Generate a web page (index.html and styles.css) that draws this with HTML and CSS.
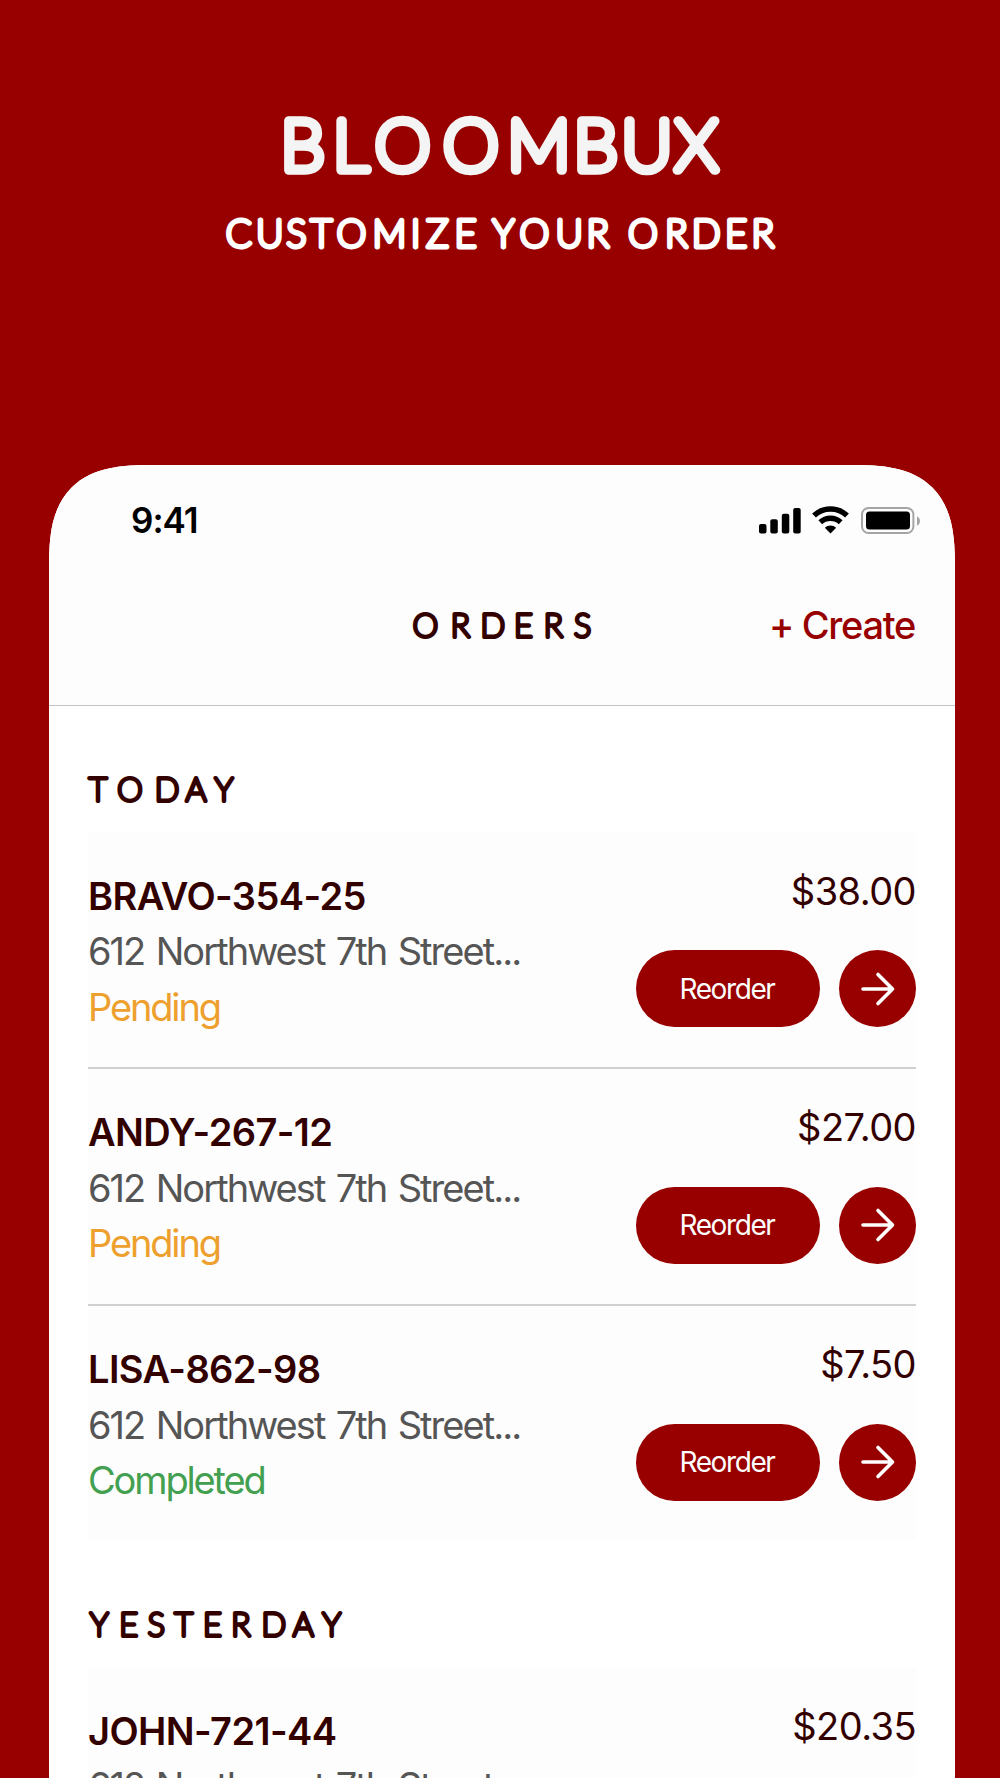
FILE: index.html
```html
<!DOCTYPE html>
<html lang="en">
<head>
  <meta charset="utf-8">
  <title>Bloombux</title>
  <link rel="stylesheet" href="styles.css">
</head>
<body>
  <header class="hero">
    <svg class="brand" viewBox="0 0 1000 90" width="1000" height="90">
      <text x="302.5 350.5 402.7 471 538.8 595.5 647 696.5" y="65">BLOOMBUX</text>
    </svg>
    <svg class="tagline" viewBox="0 0 1000 60" width="1000" height="60">
      <text x="238.7 269.7 296.4 321.3 351.5 389.4 415.5 437.3 465.6 485 503.5 534.5 569.3 597.8 620 642.8 676.2 706.2 736.2 762.7" y="47.2">CUSTOMIZE YOUR ORDER</text>
    </svg>
  </header>

  <main class="phone">
    <div class="top">
      <div class="status">
        <span class="time">9:41</span>
        <svg class="icons" viewBox="0 0 162 28" width="162" height="28">
          <g>
            <rect x="0" y="17" width="7.5" height="9.5" rx="2"/>
            <rect x="11.3" y="12.3" width="7.5" height="14.2" rx="2"/>
            <rect x="22.8" y="6.7" width="7.5" height="19.8" rx="2"/>
            <rect x="34.2" y="1" width="7.5" height="25.5" rx="2"/>
          </g>
          <path d="M71.5 26.6l-5.7-5.9a8.8 8.8 0 0 1 11.4 0z"/>
          <path class="arc" d="M55 8.6a24 24 0 0 1 33 0M61.3 15.2a15 15 0 0 1 20.4 0"/>
          <rect class="shell" x="103" y="1" width="51.4" height="25" rx="6.5"/>
          <rect x="107" y="4.6" width="44" height="18" rx="3.5"/>
          <path class="cap" d="M158 9.2c4 2 4 7.6 0 9.6z"/>
        </svg>
      </div>
      <div class="nav">
        <svg class="label" viewBox="0 0 200 40" width="200" height="40">
          <text x="25.3 60.2 92.8 123.3 153.3 182.6" y="28.8">ORDERS</text>
        </svg>
        <a class="create">+ Create</a>
      </div>
    </div>

    <section class="group">
      <svg class="label" viewBox="0 0 300 40" width="300" height="40">
        <text x="10 42 79 108 136" y="29.8">TODAY</text>
      </svg>
      <div class="orders">
        <div class="order">
          <div class="info">
            <div class="code">BRAVO-354-25</div>
            <div class="address">612 Northwest 7th Street...</div>
            <div class="pending">Pending</div>
          </div>
          <div class="side">
            <div class="price">$38.00</div>
            <div class="actions">
              <button class="reorder">Reorder</button>
              <button class="go"><svg viewBox="0 0 36 36" width="36" height="36"><path d="M3 18h29M18 3.5L32.5 18 18 32.5"/></svg></button>
            </div>
          </div>
        </div>
        <div class="order">
          <div class="info">
            <div class="code">ANDY-267-12</div>
            <div class="address">612 Northwest 7th Street...</div>
            <div class="pending">Pending</div>
          </div>
          <div class="side">
            <div class="price">$27.00</div>
            <div class="actions">
              <button class="reorder">Reorder</button>
              <button class="go"><svg viewBox="0 0 36 36" width="36" height="36"><path d="M3 18h29M18 3.5L32.5 18 18 32.5"/></svg></button>
            </div>
          </div>
        </div>
        <div class="order">
          <div class="info">
            <div class="code">LISA-862-98</div>
            <div class="address">612 Northwest 7th Street...</div>
            <div class="completed">Completed</div>
          </div>
          <div class="side">
            <div class="price">$7.50</div>
            <div class="actions">
              <button class="reorder">Reorder</button>
              <button class="go"><svg viewBox="0 0 36 36" width="36" height="36"><path d="M3 18h29M18 3.5L32.5 18 18 32.5"/></svg></button>
            </div>
          </div>
        </div>
      </div>
    </section>

    <section class="group">
      <svg class="label" viewBox="0 0 300 40" width="300" height="40">
        <text x="11.3 40.7 68.3 95.6 124.3 152.8 185.8 215.3 243.6" y="30.4">YESTERDAY</text>
      </svg>
      <div class="orders">
        <div class="order">
          <div class="info">
            <div class="code">JOHN-721-44</div>
            <div class="address">612 Northwest 7th Street...</div>
            <div class="pending">Pending</div>
          </div>
          <div class="side">
            <div class="price">$20.35</div>
          </div>
        </div>
      </div>
    </section>
  </main>
</body>
</html>
```
FILE: styles.css
```css
* {
  box-sizing: border-box;
}

body {
  margin: 0;
  height: 1778px;
  overflow: hidden;
  background: #980000;
  color: #330000;
  font-family: Inter, "Liberation Sans", sans-serif;
}

svg {
  display: block;
  overflow: visible;
}

.hero {
  height: 465px;
  padding-top: 105px;
}

/* thin letters with a fat round stroke give the soft hand-cut look */
.brand text,
.tagline text,
.label text {
  font-family: Lato, sans-serif;
  font-weight: 100;
  text-anchor: middle;
  stroke-linejoin: round;
}

.brand text {
  font-size: 70.5px;
  fill: #f4f4f4;
  stroke: #f4f4f4;
  stroke-width: 9.6px;
}

.tagline {
  margin-top: 5px;
}

.tagline text {
  font-size: 37.4px;
  fill: #fff;
  stroke: #fff;
  stroke-width: 5px;
}

.label text {
  font-size: 32.3px;
  fill: #330000;
  stroke: #330000;
  stroke-width: 4.1px;
}

.phone {
  width: 906px;
  height: 1400px;
  margin-left: 49px;
  background: #fff;
  border-radius: 75px 75px 0 0;
  overflow: hidden;
}

/* smooth iOS style corners */
@supports (corner-shape: superellipse(1.5)) {
  .phone {
    border-radius: 104px 104px 0 0;
    corner-shape: superellipse(1.5);
  }
}

.top {
  height: 241px;
  background: #fdfdfd;
  border-bottom: 1px solid #c2c2c2;
}

.status {
  display: flex;
  justify-content: space-between;
  padding: 35px 34px 0 82px;
  height: 135px;
  color: #000;
}

.time {
  font-size: 35px;
  font-weight: 600;
  line-height: 41px;
  letter-spacing: -1px;
}

.icons {
  margin-top: 7px;
}

.arc {
  fill: none;
  stroke: #000;
  stroke-width: 5.5;
}

.shell {
  fill: none;
  stroke: #a5a5a5;
  stroke-width: 2;
}

.cap {
  fill: #a5a5a5;
}

.nav {
  display: grid;
  grid-template-columns: 1fr auto;
  padding: 8px 40px 0 351px;
}

.create {
  color: #980000;
  font-size: 38px;
  font-weight: 550;
  line-height: 46px;
  letter-spacing: -1.3px;
  margin-top: -6px;
}

.group {
  padding: 65px 39px 0;
}

.group + .group {
  padding-top: 66px;
}

.orders {
  margin-top: 21px;
  background: #fdfdfd;
}

.order {
  display: flex;
  justify-content: space-between;
  height: 236.8px;
  padding-top: 35.5px;
  border-bottom: 2px solid #d0d0d0;
  font-size: 38px;
}

.order:last-child {
  height: 234.8px;
  border-bottom: 0;
}

.info {
  padding-top: 1px;
  line-height: 55.6px;
}

.code {
  font-weight: 600;
  letter-spacing: -0.6px;
}

.address {
  color: #555;
  letter-spacing: -1.95px;
  word-spacing: 2.6px;
}

.pending,
.completed {
  letter-spacing: -2.15px;
}

.pending {
  color: #eda02d;
}

.completed {
  color: #43a050;
}

.side {
  display: flex;
  flex-direction: column;
  align-items: flex-end;
}

.price {
  line-height: 46px;
  letter-spacing: -0.55px;
}

.actions {
  display: flex;
  gap: 19px;
  margin-top: 36.5px;
}

button {
  height: 77px;
  padding: 0;
  border: 0;
  border-radius: 39px;
  background: #980000;
  color: #fff;
  font-family: inherit;
}

.reorder {
  width: 184px;
  padding-right: 2px;
  font-size: 28px;
  letter-spacing: -1.4px;
}

.go {
  display: flex;
  align-items: center;
  justify-content: center;
  width: 77px;
}

.go path {
  fill: none;
  stroke: #fff;
  stroke-width: 3.6;
  stroke-linecap: round;
  stroke-linejoin: round;
}
```
